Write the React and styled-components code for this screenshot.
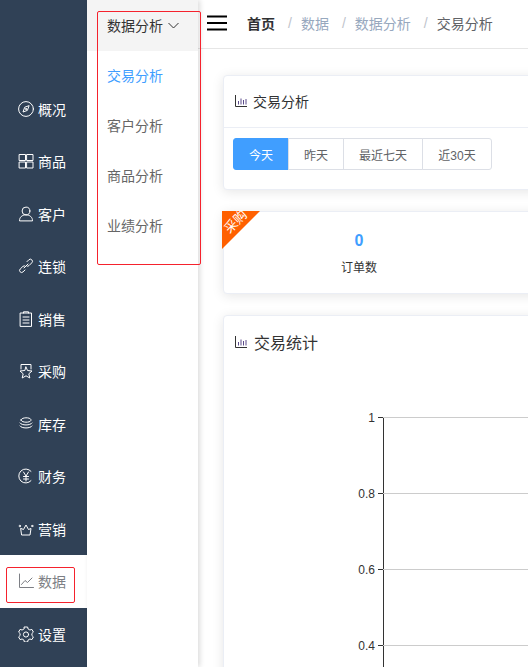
import React from "react";
import styled, { createGlobalStyle } from "styled-components";

const Global = createGlobalStyle`
  html, body { margin: 0; padding: 0; background: #fff; }
  body { font-family: "Liberation Sans", "Noto Sans CJK SC", sans-serif; font-size: 14px; }
  * { box-sizing: border-box; }
`;

const Page = styled.div`
  position: relative;
  display: flex;
  width: 528px;
  height: 667px;
  overflow: hidden;
`;

const Sidebar = styled.nav`
  flex: 0 0 87px;
  background: #304156;
  padding-top: 82.5px;
  display: flex;
  flex-direction: column;
`;

const NavItem = styled.div`
  position: relative;
  height: 52.5px;
  display: flex;
  align-items: center;
  padding-left: 18px;
  gap: 4px;
  font-size: 14px;
  color: ${(p) => (p.$active ? "#7d7f85" : "#fff")};
  background: ${(p) => (p.$active ? "#fff" : "transparent")};
  svg { flex: 0 0 16px; width: 16px; height: 16px; }
`;

const SubMenu = styled.aside`
  flex: 0 0 111px;
  background: #fff;
  box-shadow: 2px 0 5px rgba(0, 0, 0, 0.14);
  z-index: 1;
`;

const SubHead = styled.div`
  height: 51px;
  margin-bottom: -1px;
  background: #f4f4f4;
  display: flex;
  align-items: center;
  padding: 0 0 2px 20px;
  gap: 5px;
  color: #333;
  svg { width: 11px; height: 11px; margin-top: 1px; }
`;

const SubItem = styled.div`
  height: 50px;
  display: flex;
  align-items: center;
  padding-left: 20px;
  color: ${(p) => (p.$active ? "#409eff" : "#666")};
`;

const Main = styled.main`
  flex: 0 0 auto;
  width: 500px;
  background: #fff;
  padding-bottom: 40px;
`;

const TopBar = styled.header`
  height: 49px;
  border-bottom: 1px solid #e6e6e6;
  display: flex;
  align-items: center;
  padding: 0 0 2px 9px;
`;

const Burger = styled.svg`
  width: 20px;
  height: 16px;
  margin-right: 20px;
`;

const Crumb = styled.span`
  font-size: 14px;
  font-weight: ${(p) => (p.$strong ? 700 : 400)};
  color: ${(p) => p.$color};
`;

const Sep = styled.span`
  color: #c0c4cc;
  margin: 0 9px 0 13px;
  font-size: 14px;
`;

const Content = styled.div`
  padding: 26px 0 0 25px;
  display: flex;
  flex-direction: column;
  gap: 21px;
`;

const Card = styled.section`
  position: relative;
  width: 470px;
  background: #fff;
  border: 1px solid #ebeef5;
  border-radius: 4px;
  box-shadow: 0 2px 12px rgba(0, 0, 0, 0.1);
  overflow: hidden;
`;

const CardHead = styled.div`
  height: 52px;
  display: flex;
  align-items: center;
  padding: 0 0 2px 10px;
  gap: 5px;
  border-bottom: 1px solid #ebeef5;
  font-size: 14px;
  color: #303133;
  svg { width: 14px; height: 14px; }
`;

const CardBody = styled.div`
  padding: 10px 9px;
  height: 61px;
`;

const Group = styled.div`
  display: inline-flex;
  height: 32px;
`;

const Btn = styled.div`
  width: ${(p) => p.$w}px;
  display: flex;
  align-items: center;
  justify-content: center;
  font-size: 12px;
  margin-left: -1px;
  color: ${(p) => (p.$active ? "#fff" : "#606266")};
  background: ${(p) => (p.$active ? "#409eff" : "#fff")};
  border: 1px solid ${(p) => (p.$active ? "#409eff" : "#dcdfe6")};
  &:first-child { margin-left: 0; border-radius: 3px 0 0 3px; }
  &:last-child { border-radius: 0 3px 3px 0; }
`;

const StatCard = styled(Card)`
  height: 83px;
  overflow: visible;
`;

const Ribbon = styled.div`
  position: absolute;
  left: -2px;
  top: -1px;
  width: 38px;
  height: 38px;
  background: #ff6000;
  clip-path: polygon(0 0, 100% 0, 0 100%);
`;

const RibbonText = styled.span`
  position: absolute;
  left: -1px;
  top: 3px;
  width: 26px;
  text-align: center;
  font-size: 13px;
  line-height: 14px;
  color: #fff;
  transform: rotate(-45deg);
  white-space: nowrap;
`;

const Stat = styled.div`
  width: 270px;
  padding-top: 20px;
  display: flex;
  flex-direction: column;
  align-items: center;
`;

const StatValue = styled.div`
  font-size: 16px;
  line-height: 18px;
  font-weight: 700;
  color: #409eff;
`;

const StatLabel = styled.div`
  margin-top: 10px;
  font-size: 12px;
  line-height: 16px;
  color: #333;
`;

const ChartCard = styled(Card)`
  height: 500px;
`;

const ChartTitle = styled.div`
  height: 54px;
  display: flex;
  align-items: center;
  padding: 0 0 2px 10px;
  gap: 6px;
  font-size: 16px;
  color: #333;
  svg { width: 14px; height: 14px; }
`;

const ChartSvg = styled.svg`
  display: block;
  width: 468px;
  height: 444px;
`;

const Highlight = styled.div`
  position: absolute;
  left: ${(p) => p.$l}px;
  top: ${(p) => p.$t}px;
  width: ${(p) => p.$w}px;
  height: ${(p) => p.$h}px;
  border: 1px solid #f5222d;
  border-radius: 2px;
  pointer-events: none;
  z-index: 3;
`;

const s = { fill: "none", stroke: "currentColor", strokeWidth: 1, strokeLinecap: "round", strokeLinejoin: "round" };
const I = ({ children }) => <svg viewBox="0 0 16 16" {...s}>{children}</svg>;

const icons = {
  compass: <I><circle cx="8" cy="8" r="7.400" /><path d="M11 5 9.400 9.400 5 11 6.600 6.600Z" /><circle cx="8" cy="8" r=".6" /></I>,
  grid: <I><rect x="1.500" y="1.500" width="6" height="6" /><rect x="9" y="1.500" width="6" height="6" /><rect x="1.500" y="9" width="6" height="6" /><rect x="9" y="9" width="6" height="6" /></I>,
  user: <I><circle cx="8" cy="5" r="3.900" /><path d="M1.500 14.500c0-3.400 2.600-5.600 6.500-5.600s6.500 2.200 6.500 5.600Z" /></I>,
  link: <I><path d="M9 3.600 10.800 1.800a1.900 1.900 0 0 1 3 3L11 7.600a1.900 1.900 0 0 1-2.800 0" /><path d="M7.600 8.400a1.900 1.900 0 0 0-2.700 0L2.200 11a2 2 0 0 0 2.800 2.900L7 12" /><path d="M6 10 10 6" /></I>,
  list: <I><rect x="2.500" y="2" width="11" height="13.400" /><path d="M5.500 2V.8h5V2M5 6h6M5 9h6M5 12h6" /></I>,
  star: <I><path d="M3 6V1.500H13V6" /><path d="M8 4 9.500 7.500 14 8 10.800 10.800 11.800 15 8 12.800 4.200 15 5.200 10.800 2 8 6.500 7.500Z" /></I>,
  layers: <I><path d="M3 4c0-3 10-3 10 0s-10 3-10 0Z" /><path d="M2 7c1.500 2.700 10.500 2.700 12 0M2 10c1.500 2.700 10.500 2.700 12 0" /></I>,
  yen: <I><path d="M13 3.300A7 7 0 1 0 13 12.700" /><path d="M5.500 4 8 8l2.500-4M5.500 8.500h5M5.500 11h5M8 8v5" /></I>,
  crown: <I><path d="M3 7.500 5.500 8.500 8 4l2.500 4.500L13 7.500l-1 6.500H4Z" /><circle cx="1.800" cy="5" r=".7" /><circle cx="14.200" cy="5" r=".7" /></I>,
  line: <I><path d="M1.500 1v13.500H15.500" /><path d="M3.500 11.500 7 7.500l2.500 2L14 5" /></I>,
  gear: <I><path d="M6.400 1h3.200l.5 2 1.800 1 2-.6 1.500 2.700-1.500 1.400v2l1.500 1.400-1.500 2.700-2-.6-1.800 1-.5 2H6.400l-.5-2-1.800-1-2 .6L.6 10.900l1.500-1.400v-2L.6 6.100l1.500-2.700 2 .6 1.800-1Z" /><circle cx="8" cy="8.500" r="2.600" /></I>,
};

const nav = [
  ["compass", "概况"], ["grid", "商品"], ["user", "客户"], ["link", "连锁"], ["list", "销售"], ["star", "采购"],
  ["layers", "库存"], ["yen", "财务"], ["crown", "营销"], ["line", "数据"], ["gear", "设置"],
];

const BarIcon = () => (
  <svg viewBox="0 0 14 14" fill="none" stroke="#333" strokeWidth="1">
    <path d="M1.500 1v11.500H13" />
    <path d="M4.500 10.500V7M7 10.500V4.500M9.500 10.500V6M12 10.500V5" stroke="#5b4a8a" />
  </svg>
);

const ticks = [
  { label: "1", y: 47.5 },
  { label: "0.8", y: 123.5 },
  { label: "0.6", y: 199.5 },
  { label: "0.4", y: 275.5 },
];

export default function App() {
  return (
    <Page>
      <Global />
      <Sidebar>
        {nav.map(([icon, label]) => (
          <NavItem key={label} $active={label === "数据"}>
            {icons[icon]}
            {label}
          </NavItem>
        ))}
      </Sidebar>
      <SubMenu>
        <SubHead>
          数据分析
          <svg viewBox="0 0 11 11" fill="none" stroke="#333" strokeWidth="1"><path d="M.5 3l5 5 5-5" /></svg>
        </SubHead>
        <SubItem $active>交易分析</SubItem>
        <SubItem>客户分析</SubItem>
        <SubItem>商品分析</SubItem>
        <SubItem>业绩分析</SubItem>
      </SubMenu>
      <Main>
        <TopBar>
          <Burger viewBox="0 0 20 16"><path d="M0 1.500h20M0 8h20M0 14.500h20" stroke="#000" strokeWidth="2" /></Burger>
          <Crumb $strong $color="#303133">首页</Crumb>
          <Sep>/</Sep>
          <Crumb $color="#97a8be">数据</Crumb>
          <Sep>/</Sep>
          <Crumb $color="#97a8be">数据分析</Crumb>
          <Sep>/</Sep>
          <Crumb $color="#606266">交易分析</Crumb>
        </TopBar>
        <Content>
          <Card>
            <CardHead><BarIcon />交易分析</CardHead>
            <CardBody>
              <Group>
                <Btn $w={56} $active>今天</Btn>
                <Btn $w={56}>昨天</Btn>
                <Btn $w={80}>最近七天</Btn>
                <Btn $w={70}>近30天</Btn>
              </Group>
            </CardBody>
          </Card>
          <StatCard>
            <Ribbon />
            <RibbonText>采购</RibbonText>
            <Stat>
              <StatValue>0</StatValue>
              <StatLabel>订单数</StatLabel>
            </Stat>
          </StatCard>
          <ChartCard>
            <ChartTitle><BarIcon />交易统计</ChartTitle>
            <ChartSvg viewBox="0 0 468 444">
              <path d="M159.500 47V444" stroke="#333" fill="none" />
              {ticks.map((t) => (
                <g key={t.label}>
                  <path d={`M154 ${t.y}H468`} stroke="#ccc" fill="none" />
                  <path d={`M154 ${t.y}H159`} stroke="#333" fill="none" />
                  <text x="151" y={t.y + 4} textAnchor="end" fontSize="12" fill="#333" fontFamily="Liberation Sans, sans-serif">{t.label}</text>
                </g>
              ))}
            </ChartSvg>
          </ChartCard>
        </Content>
      </Main>
      <Highlight $l={97} $t={11} $w={104} $h={254} />
      <Highlight $l={6} $t={567} $w={69} $h={36} />
    </Page>
  );
}
